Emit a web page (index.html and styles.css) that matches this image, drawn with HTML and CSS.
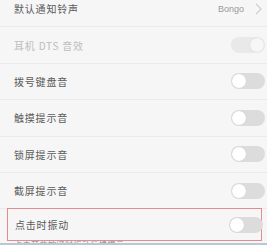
FILE: index.html
```html
<!DOCTYPE html>
<html>
<head>
<meta charset="utf-8">
<link rel="stylesheet" href="styles.css">
</head>
<body>
<div class="list">
  <div class="row">
    <span class="label">默认通知铃声</span>
    <span class="value">Bongo<svg class="chev" width="7" height="12" viewBox="0 0 7 12"><path d="M1 1 L6 6 L1 11" fill="none" stroke="#cfcfcf" stroke-width="1.2"/></svg></span>
  </div>
  <div class="row disabled">
    <span class="label">耳机 DTS 音效</span>
    <span class="toggle on"><span class="knob"></span></span>
  </div>
  <div class="row">
    <span class="label">拨号键盘音</span>
    <span class="toggle"><span class="knob"></span></span>
  </div>
  <div class="row">
    <span class="label">触摸提示音</span>
    <span class="toggle"><span class="knob"></span></span>
  </div>
  <div class="row">
    <span class="label">锁屏提示音</span>
    <span class="toggle"><span class="knob"></span></span>
  </div>
  <div class="row">
    <span class="label">截屏提示音</span>
    <span class="toggle"><span class="knob"></span></span>
  </div>
  <div class="row last">
    <div class="mark">
      <span class="label">点击时振动</span>
      <span class="toggle"><span class="knob"></span></span>
    </div>
    <div class="desc">点击某些按键时振动反馈提示</div>
  </div>
</div>
<div class="strip"></div>
</body>
</html>
```
FILE: styles.css
```css
html, body {
  margin: 0;
  padding: 0;
  background: #f6f6f6;
  overflow: hidden;
  height: 245px;
}
body {
  font-family: "Noto Sans CJK SC", "Liberation Sans", sans-serif;
  position: relative;
}
.list {
  margin-top: -9px;
}
.row {
  height: 35.4px;
  border-bottom: 1px solid #ebebeb;
  display: flex;
  align-items: center;
  justify-content: space-between;
  padding: 0 2px 0 14px;
}
.label {
  font-size: 10px;
  letter-spacing: 0.8px;
  color: #5a5a5a;
}
.disabled .label {
  color: #bdbdbd;
}
.value {
  display: flex;
  align-items: center;
  gap: 11px;
  font-family: "Liberation Sans", sans-serif;
  font-size: 9px;
  color: #9a9a9a;
  margin-right: 3px;
}
.toggle {
  width: 34px;
  height: 16px;
  border-radius: 8px;
  background: #dcdcdc;
  display: flex;
  align-items: center;
  padding: 0 1px;
  box-sizing: border-box;
}
.toggle .knob {
  width: 14px;
  height: 14px;
  border-radius: 50%;
  background: #fff;
  box-shadow: 0 0 1px rgba(0,0,0,0.15);
}
.toggle.on {
  background: #e9e9e9;
  justify-content: flex-end;
}
.toggle.on .knob {
  background: #f7f7f7;
}
.row.last {
  display: block;
  height: auto;
  border: none;
  padding: 0 0 0 7px;
  margin-top: -1px;
}
.mark {
  width: 255px;
  height: 33px;
  box-sizing: border-box;
  border: 1px solid #e58a8f;
  display: flex;
  align-items: center;
  justify-content: space-between;
  padding: 0 0 0 7px;
}
.mark .toggle {
  margin-right: -2px;
}
.desc {
  font-size: 8px;
  color: #888;
  padding-left: 7px;
  margin-top: -2px;
  letter-spacing: 0.5px;
}
.strip {
  position: absolute;
  left: 0;
  right: 0;
  bottom: 0;
  height: 2px;
  background: #b9c8d8;
}
```
